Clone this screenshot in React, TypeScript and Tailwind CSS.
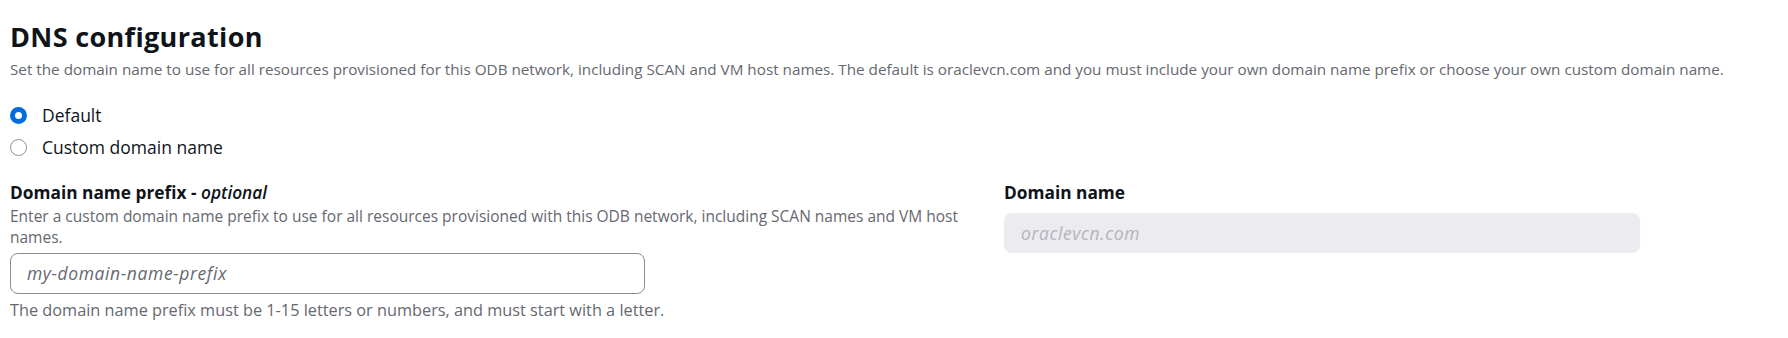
import React from "react";

export default function App() {
  return (
    <div className="w-[1788px] h-[338px] bg-white pl-[10px] pt-[21px] font-['Open_Sans',sans-serif]">
      <h2 className="text-[27px] leading-[32px] font-bold text-[#0f141a] tracking-[0.35px]">DNS configuration</h2>
      <p className="mt-[6px] text-[15.25px] leading-[20px] text-[#656871]">
        Set the domain name to use for all resources provisioned for this ODB network, including SCAN and VM host names. The default is oraclevcn.com and you must include your own domain name prefix or choose your own custom domain name.
      </p>
      <div className="mt-[26px] flex flex-col gap-[12px]">
        <label className="flex items-center gap-[15px] h-[20px]">
          <span className="w-[17px] h-[17px] rounded-full bg-[#006ce0] flex items-center justify-center">
            <span className="w-[7px] h-[7px] rounded-full bg-white" />
          </span>
          <span className="text-[17.5px] text-[#0f141a]">Default</span>
        </label>
        <label className="flex items-center gap-[15px] h-[20px]">
          <span className="w-[17px] h-[17px] rounded-full border-[1.5px] border-[#8c8c94] bg-white" />
          <span className="text-[17.5px] text-[#0f141a]">Custom domain name</span>
        </label>
      </div>
      <div className="mt-[25px] grid grid-cols-[974px_1fr] gap-x-[20px]">
        <div>
          <div className="text-[17.3px] leading-[22px] font-bold text-[#0f141a]">
            Domain name prefix - <i className="font-semibold">optional</i>
          </div>
          <p className="mt-[2px] text-[15.5px] leading-[21px] text-[#656871]">
            Enter a custom domain name prefix to use for all resources provisioned with this ODB network, including SCAN names and VM host names.
          </p>
          <div className="mt-[5px] w-[635px] h-[41px] rounded-[8px] border-[1.5px] border-[#8c8c94] flex items-center pl-[16px]">
            <span className="italic text-[17.5px] tracking-[0.6px] text-[#656871]">my-domain-name-prefix</span>
          </div>
          <p className="mt-[6px] text-[16.3px] leading-[21px] text-[#656871]">
            The domain name prefix must be 1-15 letters or numbers, and must start with a letter.
          </p>
        </div>
        <div>
          <div className="text-[17.3px] leading-[22px] font-bold text-[#0f141a]">Domain name</div>
          <div className="mt-[9px] w-[636px] h-[40px] rounded-[8px] bg-[#ebebf0] flex items-center pl-[17px]">
            <span className="italic text-[17.5px] tracking-[0.6px] text-[#b4b4bb]">oraclevcn.com</span>
          </div>
        </div>
      </div>
    </div>
  );
}
